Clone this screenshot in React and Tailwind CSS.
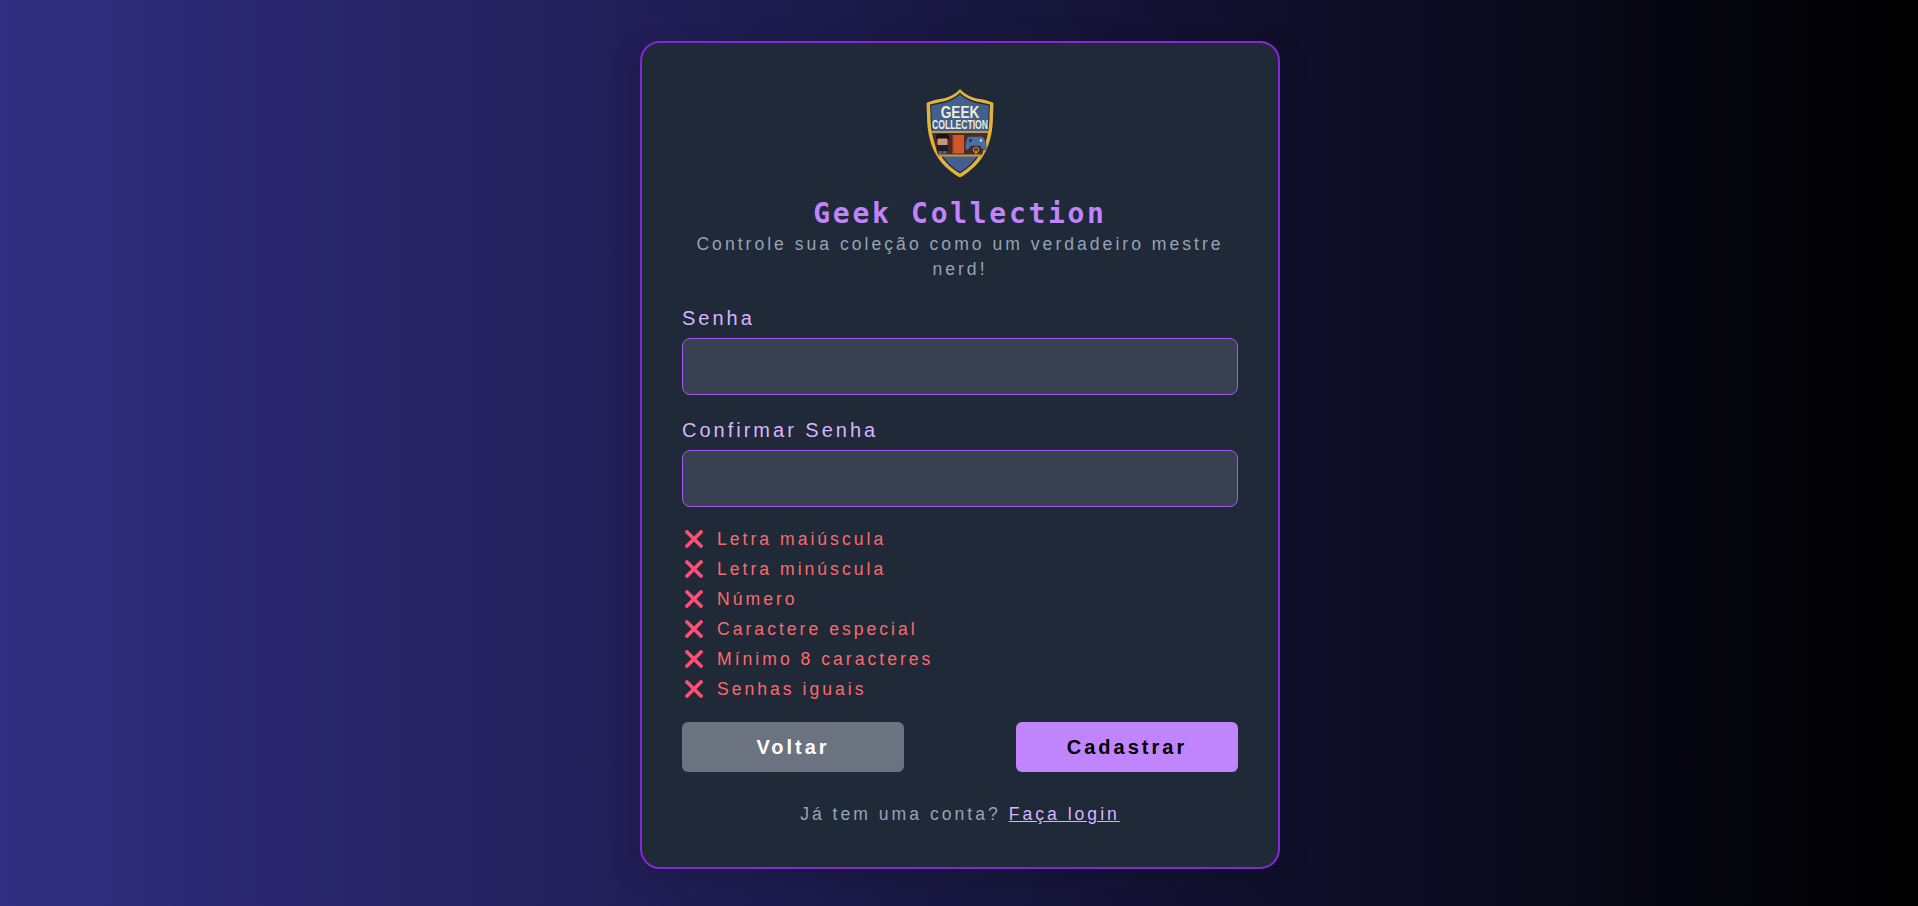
import React from "react"

const rules = [
  "Letra maiúscula",
  "Letra minúscula",
  "Número",
  "Caractere especial",
  "Mínimo 8 caracteres",
  "Senhas iguais",
]

function Logo() {
  return (
    <svg width="68" height="90" viewBox="0 0 68 90" className="block">
      <path
        d="M34 1 C38 6 46 10 54 11 C60 12 64 13 67.5 15 L67 27 C67 55 58 76 34 89.5 C10 76 1 55 1 27 L0.5 15 C4 13 8 12 14 11 C22 10 30 6 34 1 Z"
        fill="#e2b33c"
      />
      <path
        d="M34 4.5 C38 9 46 13 53 14 L64 16.5 L63.5 27 C63.5 53 55 73 34 85.5 C13 73 4.5 53 4.5 27 L4 16.5 L15 14 C22 13 30 9 34 4.5 Z"
        fill="#1c2535"
      />
      <path
        d="M34 6 C38 10.5 46 14.5 53 15.5 L63 17.5 L62.5 27 C62.5 52 54 72 34 84 C14 72 5.5 52 5.5 27 L5 17.5 L15 15.5 C22 14.5 30 10.5 34 6 Z"
        fill="#41608f"
      />
      <g fill="#f3ecd6" className="font-['Liberation_Sans',sans-serif] font-bold" style={{ letterSpacing: 0 }}>
        <text transform="translate(34 30) scale(0.8 1)" textAnchor="middle" fontSize="17">GEEK</text>
        <text transform="translate(34 41) scale(0.69 1)" textAnchor="middle" fontSize="12.5">COLLECTION</text>
      </g>
      <path d="M6 43 H62 V45 H6 Z" fill="#c39a3c" />
      <path d="M7 45 H61 C60 54 58 61 56 67 H12 C10 61 8 54 7 45 Z" fill="#4a2b26" />
      <path d="M12 66.5 H56 V68.5 H12 Z" fill="#c39a3c" />
      {/* boneco */}
      <rect x="10" y="46" width="13" height="7" rx="3" fill="#14141c" />
      <rect x="11.5" y="50.5" width="10" height="6.5" rx="1" fill="#c9986f" />
      <rect x="11" y="57" width="11" height="6" fill="#18202e" />
      <rect x="12.5" y="63" width="3.5" height="3" fill="#41608f" />
      <rect x="17" y="63" width="3.5" height="3" fill="#41608f" />
      {/* livro */}
      <rect x="26" y="47" width="12" height="18.5" fill="#d2562c" />
      <rect x="26" y="47" width="1.5" height="18.5" fill="#8c3a22" />
      {/* controle */}
      <path d="M43 48.5 H56 C59 48.5 61 58 60 61 C59 63 56 62 54 58 H45 C43 62 40 63 39.5 61 C39 58 40 48.5 43 48.5 Z" fill="#4d6ea3" stroke="#24324d" strokeWidth="0.5" />
      <circle cx="44.5" cy="52.5" r="1.5" fill="#24324d" />
      <circle cx="55" cy="52.5" r="1.2" fill="#dfe5ee" />
      <circle cx="50" cy="62" r="2.6" fill="#4a2b26" stroke="#c39a3c" strokeWidth="1" />
      <rect x="49.4" y="62" width="1.2" height="4.5" fill="#c39a3c" />
    </svg>
  )
}

function CrossIcon() {
  return (
    <svg width="18" height="18" viewBox="0 0 18 18" className="shrink-0">
      <path d="M2 2 L16 16 M16 2 L2 16" stroke="#ff4d73" strokeWidth="3.8" strokeLinecap="round" />
    </svg>
  )
}

function Field({ label, className }) {
  return (
    <div className={"flex flex-col " + className}>
      <label className="mb-[5px] text-[20px] leading-[30px] text-[#d8b4fe]">{label}</label>
      <input
        type="password"
        className="h-[57px] w-full rounded-lg border border-[#a855f7] bg-[#374151] px-3 outline-none"
      />
    </div>
  )
}

export default function App() {
  return (
    <div className="flex h-screen justify-center overflow-hidden bg-linear-to-r/srgb from-[#312e81] to-black pt-[41px] pl-[2px] font-['Liberation_Sans',Arial,sans-serif] tracking-[3px]">
      <div className="h-[828px] w-[640px] rounded-[20px] border-2 border-[#8128d8] bg-[#1f2937] px-[40px] pt-[45px] shadow-[0_8px_32px_rgba(0,0,0,0.15)]">
        <div className="flex justify-center">
          <Logo />
        </div>
        <h1 className="mt-[18px] text-center font-['DejaVu_Sans_Mono',monospace] text-[28px] leading-[36px] font-bold tracking-[2.7px] text-[#c084fc]">
          Geek Collection
        </h1>
        <p className="mb-[21px] text-center text-[17.6px] leading-[25px] text-[#94a3b8]">
          Controle sua coleção como um verdadeiro mestre nerd!
        </p>
        <Field label="Senha" className="mb-5" />
        <Field label="Confirmar Senha" className="mb-[17px]" />
        <ul className="mb-[18px] flex flex-col">
          {rules.map((rule) => (
            <li key={rule} className="flex h-[30px] items-center gap-[14px] pl-[3px] text-[17.6px] text-[#fb6a6a]">
              <CrossIcon />
              {rule}
            </li>
          ))}
        </ul>
        <div className="flex justify-between">
          <button className="h-[50px] w-[222px] rounded-md bg-[#6b7280] text-[20px] font-bold text-white">Voltar</button>
          <button className="h-[50px] w-[222px] rounded-md bg-[#c084fc] text-[20px] font-bold text-black">Cadastrar</button>
        </div>
        <p className="mt-[29px] text-center text-[17.6px] leading-[26px] text-[#94a3b8]">
          Já tem uma conta? <a href="#" className="text-[#d8b4fe] underline">Faça login</a>
        </p>
      </div>
    </div>
  )
}
